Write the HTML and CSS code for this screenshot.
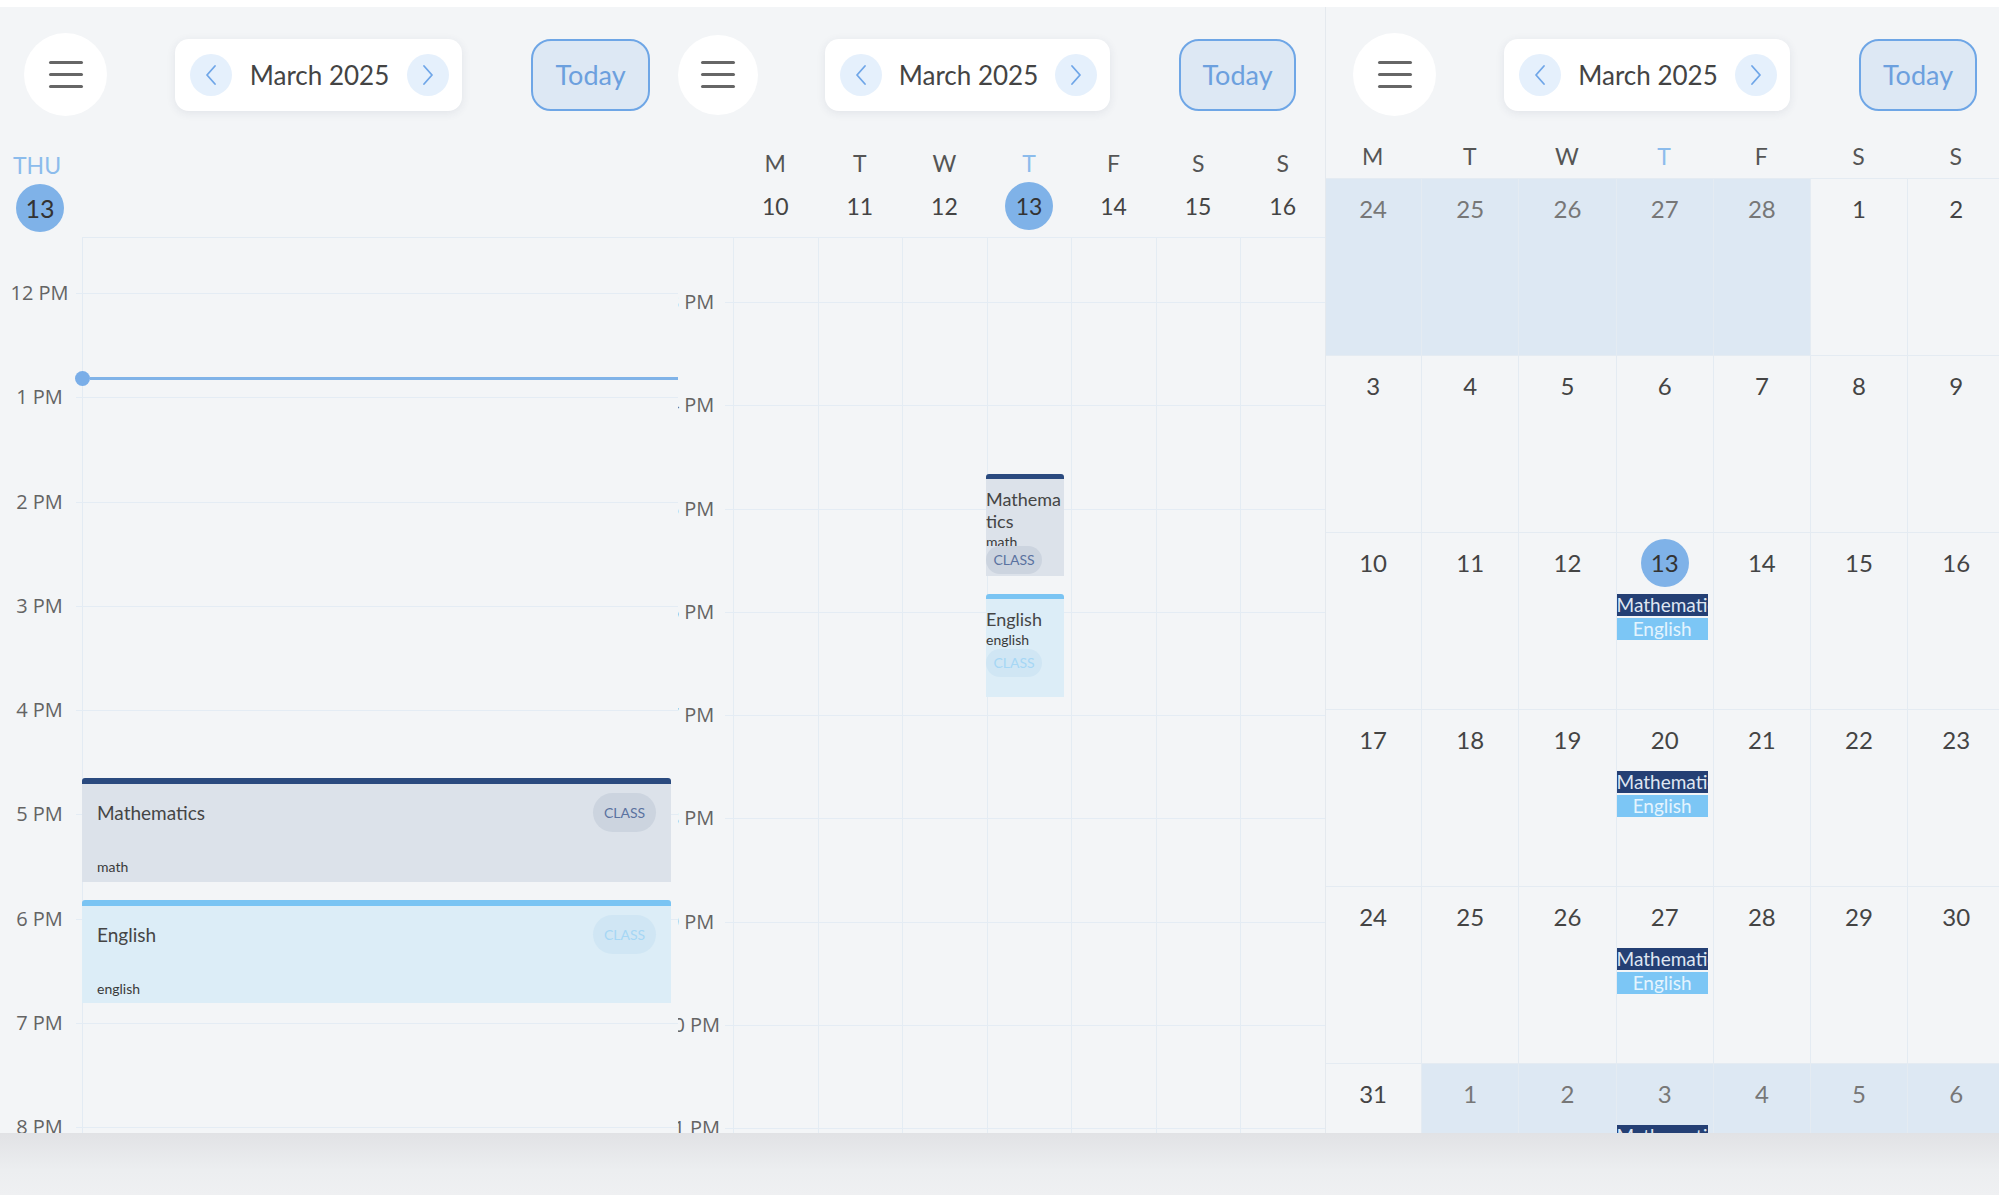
FILE: index.html
```html
<!DOCTYPE html>
<html>
<head>
<meta charset="utf-8">
<title>Calendar</title>
<link rel="stylesheet" href="styles.css">
</head>
<body>
<div class="app">
  <div class="panels">
    <!-- DAY VIEW -->
    <section class="panel day">
      <header class="topbar">
        <div class="menu"><span></span><span></span><span></span></div>
        <div class="month-pill">
          <span class="nav"><svg width="12" height="22" viewBox="0 0 12 22"><path d="M10 2 L2 11 L10 20" fill="none" stroke="#6fa6e8" stroke-width="1.8" stroke-linecap="round" stroke-linejoin="round"/></svg></span>
          <span class="month-label">March 2025</span>
          <span class="nav"><svg width="12" height="22" viewBox="0 0 12 22"><path d="M2 2 L10 11 L2 20" fill="none" stroke="#6fa6e8" stroke-width="1.8" stroke-linecap="round" stroke-linejoin="round"/></svg></span>
        </div>
        <div class="today-btn">Today</div>
      </header>
      <div class="day-head">
        <div class="dow">THU</div>
        <div class="date-circle">13</div>
      </div>
      <div class="day-body">
        <div class="hour"><div class="hlabel">12 PM</div><div class="hline"></div></div>
        <div class="hour"><div class="hlabel">1 PM</div><div class="hline"></div></div>
        <div class="hour"><div class="hlabel">2 PM</div><div class="hline"></div></div>
        <div class="hour"><div class="hlabel">3 PM</div><div class="hline"></div></div>
        <div class="hour"><div class="hlabel">4 PM</div><div class="hline"></div></div>
        <div class="hour"><div class="hlabel">5 PM</div><div class="hline"></div></div>
        <div class="hour"><div class="hlabel">6 PM</div><div class="hline"></div></div>
        <div class="hour"><div class="hlabel">7 PM</div><div class="hline"></div></div>
        <div class="hour"><div class="hlabel">8 PM</div><div class="hline"></div></div>
        <div class="now"><span class="now-dot"></span></div>
        <div class="dev math" style="top:541px;height:104px">
          <div class="dev-row"><span class="dev-title">Mathematics</span><span class="pill">CLASS</span></div>
          <div class="dev-sub">math</div>
        </div>
        <div class="dev eng" style="top:663px;height:103px">
          <div class="dev-row"><span class="dev-title">English</span><span class="pill">CLASS</span></div>
          <div class="dev-sub">english</div>
        </div>
      </div>
    </section>

    <!-- WEEK VIEW -->
    <section class="panel week">
      <header class="topbar">
        <div class="menu"><span></span><span></span><span></span></div>
        <div class="month-pill">
          <span class="nav"><svg width="12" height="22" viewBox="0 0 12 22"><path d="M10 2 L2 11 L10 20" fill="none" stroke="#6fa6e8" stroke-width="1.8" stroke-linecap="round" stroke-linejoin="round"/></svg></span>
          <span class="month-label">March 2025</span>
          <span class="nav"><svg width="12" height="22" viewBox="0 0 12 22"><path d="M2 2 L10 11 L2 20" fill="none" stroke="#6fa6e8" stroke-width="1.8" stroke-linecap="round" stroke-linejoin="round"/></svg></span>
        </div>
        <div class="today-btn">Today</div>
      </header>
      <div class="wk-letters">
        <span></span><span>M</span><span>T</span><span>W</span><span class="tc">T</span><span>F</span><span>S</span><span>S</span>
      </div>
      <div class="wk-dates">
        <span></span><span>10</span><span>11</span><span>12</span><span class="tcircle">13</span><span>14</span><span>15</span><span>16</span>
      </div>
      <div class="wk-body">
        <div class="wk-hour"><div class="wk-hlabel">3 PM</div><div class="wk-hline"></div></div>
        <div class="wk-hour"><div class="wk-hlabel">4 PM</div><div class="wk-hline"></div></div>
        <div class="wk-hour"><div class="wk-hlabel">5 PM</div><div class="wk-hline"></div></div>
        <div class="wk-hour"><div class="wk-hlabel">6 PM</div><div class="wk-hline"></div></div>
        <div class="wk-hour"><div class="wk-hlabel">7 PM</div><div class="wk-hline"></div></div>
        <div class="wk-hour"><div class="wk-hlabel">8 PM</div><div class="wk-hline"></div></div>
        <div class="wk-hour"><div class="wk-hlabel">9 PM</div><div class="wk-hline"></div></div>
        <div class="wk-hour"><div class="wk-hlabel">10 PM</div><div class="wk-hline"></div></div>
        <div class="wk-hour"><div class="wk-hlabel">11 PM</div><div class="wk-hline"></div></div>
        <div class="wev math" style="top:236px;height:102px">
          <div class="wev-title">Mathematics</div>
          <div class="wev-sub">math</div>
          <div class="pill wpill">CLASS</div>
        </div>
        <div class="wev eng" style="top:356px;height:103px">
          <div class="wev-title">English</div>
          <div class="wev-sub">english</div>
          <div class="pill wpill">CLASS</div>
        </div>
      </div>
    </section>

    <!-- MONTH VIEW -->
    <section class="panel month">
      <header class="topbar">
        <div class="menu"><span></span><span></span><span></span></div>
        <div class="month-pill">
          <span class="nav"><svg width="12" height="22" viewBox="0 0 12 22"><path d="M10 2 L2 11 L10 20" fill="none" stroke="#6fa6e8" stroke-width="1.8" stroke-linecap="round" stroke-linejoin="round"/></svg></span>
          <span class="month-label">March 2025</span>
          <span class="nav"><svg width="12" height="22" viewBox="0 0 12 22"><path d="M2 2 L10 11 L2 20" fill="none" stroke="#6fa6e8" stroke-width="1.8" stroke-linecap="round" stroke-linejoin="round"/></svg></span>
        </div>
        <div class="today-btn">Today</div>
      </header>
      <div class="mo-letters">
        <span>M</span><span>T</span><span>W</span><span class="tc">T</span><span>F</span><span>S</span><span>S</span>
      </div>
      <div class="mo-grid">
        <div class="mcell other"><div class="mnum">24</div></div>
        <div class="mcell other"><div class="mnum">25</div></div>
        <div class="mcell other"><div class="mnum">26</div></div>
        <div class="mcell other"><div class="mnum">27</div></div>
        <div class="mcell other"><div class="mnum">28</div></div>
        <div class="mcell"><div class="mnum">1</div></div>
        <div class="mcell"><div class="mnum">2</div></div>

        <div class="mcell"><div class="mnum">3</div></div>
        <div class="mcell"><div class="mnum">4</div></div>
        <div class="mcell"><div class="mnum">5</div></div>
        <div class="mcell"><div class="mnum">6</div></div>
        <div class="mcell"><div class="mnum">7</div></div>
        <div class="mcell"><div class="mnum">8</div></div>
        <div class="mcell"><div class="mnum">9</div></div>

        <div class="mcell"><div class="mnum">10</div></div>
        <div class="mcell"><div class="mnum">11</div></div>
        <div class="mcell"><div class="mnum">12</div></div>
        <div class="mcell"><div class="mnum today">13</div><div class="chip cm">Mathematics</div><div class="chip ce">English</div></div>
        <div class="mcell"><div class="mnum">14</div></div>
        <div class="mcell"><div class="mnum">15</div></div>
        <div class="mcell"><div class="mnum">16</div></div>

        <div class="mcell"><div class="mnum">17</div></div>
        <div class="mcell"><div class="mnum">18</div></div>
        <div class="mcell"><div class="mnum">19</div></div>
        <div class="mcell"><div class="mnum">20</div><div class="chip cm">Mathematics</div><div class="chip ce">English</div></div>
        <div class="mcell"><div class="mnum">21</div></div>
        <div class="mcell"><div class="mnum">22</div></div>
        <div class="mcell"><div class="mnum">23</div></div>

        <div class="mcell"><div class="mnum">24</div></div>
        <div class="mcell"><div class="mnum">25</div></div>
        <div class="mcell"><div class="mnum">26</div></div>
        <div class="mcell"><div class="mnum">27</div><div class="chip cm">Mathematics</div><div class="chip ce">English</div></div>
        <div class="mcell"><div class="mnum">28</div></div>
        <div class="mcell"><div class="mnum">29</div></div>
        <div class="mcell"><div class="mnum">30</div></div>

        <div class="mcell"><div class="mnum">31</div></div>
        <div class="mcell other"><div class="mnum">1</div></div>
        <div class="mcell other"><div class="mnum">2</div></div>
        <div class="mcell other"><div class="mnum">3</div><div class="chip cm">Mathematics</div><div class="chip ce">English</div></div>
        <div class="mcell other"><div class="mnum">4</div></div>
        <div class="mcell other"><div class="mnum">5</div></div>
        <div class="mcell other"><div class="mnum">6</div></div>
      </div>
    </section>
  </div>
  <div class="footer"></div>
</div>
</body>
</html>
```

FILE: styles.css
```css
* { box-sizing: border-box; margin: 0; padding: 0; }
html, body { background: #ffffff; overflow: hidden; }
body { font-family: Lato, "Open Sans", sans-serif; color: #444444; }

.app {
  margin-top: 7px;
  width: 1999px;
  height: 1188px;
  background: #f3f5f7;
  display: flex;
  flex-direction: column;
  overflow: hidden;
}
.panels { display: flex; height: 1126px; flex: none; }
.panel {
  position: relative;
  overflow: hidden;
  display: flex;
  flex-direction: column;
  flex: none;
}
.day { width: 678px; }
.week { width: 647px; }
.month { width: 674px; border-left: 1px solid #e4e9ee; }
.footer {
  flex: none;
  height: 62px;
  background: linear-gradient(#e1e2e5, #eceef0 60%, #eff0f2);
}

/* ---------- top bar ---------- */
.topbar {
  display: flex;
  align-items: center;
  margin-top: 26px;
  height: 83px;
  flex: none;
}
.day .topbar { padding-left: 24px; }
.week .topbar { padding-left: 0; }
.month .topbar { padding-left: 27px; }

.menu {
  flex: none;
  width: 83px;
  height: 83px;
  border-radius: 50%;
  background: #ffffff;
  display: flex;
  flex-direction: column;
  align-items: center;
  justify-content: center;
  gap: 9px;
}
.menu span {
  display: block;
  width: 34px;
  height: 3px;
  border-radius: 2px;
  background: #666666;
}
.month-pill {
  flex: none;
  margin-left: 68px;
  width: 287px;
  height: 72px;
  background: #ffffff;
  border-radius: 14px;
  box-shadow: 0 2px 10px rgba(40, 60, 90, 0.09);
  display: flex;
  align-items: center;
  justify-content: space-between;
  padding: 0 13px 0 15px;
}
.nav {
  width: 42px;
  height: 42px;
  border-radius: 50%;
  background: #e5f0fc;
  display: flex;
  align-items: center;
  justify-content: center;
}
.month-label { font-size: 26px; color: #444444; }
.today-btn {
  flex: none;
  margin-left: 69px;
  width: 119px;
  height: 72px;
  border: 2px solid #6ea6e6;
  border-radius: 20px;
  background: #dde8f4;
  color: #6ca0de;
  font-size: 27px;
  display: flex;
  align-items: center;
  justify-content: center;
}
.week .menu { width: 80px; height: 80px; }
.week .month-pill { margin-left: 67px; width: 285px; }
.week .today-btn { width: 117px; }
.month .month-pill { margin-left: 68px; width: 286px; }
.month .today-btn { margin-left: 69px; width: 118px; }

/* ---------- day view ---------- */
.day-head { flex: none; margin-top: 35px; padding-left: 13px; }
.dow { font-size: 23px; line-height: 28px; color: #8cbcec; }
.date-circle {
  margin: 5px 0 0 3px;
  width: 48px;
  height: 48px;
  border-radius: 50%;
  background: #7fb2e8;
  color: #333333;
  font-size: 25px;
  line-height: 48px;
  text-align: center;
}
.day-body {
  position: relative;
  flex: 1;
  margin-top: 5px;
  overflow: hidden;
  padding-top: 56px;
  background:
    linear-gradient(#e3ebf3, #e3ebf3) 82px 0 / 1px 100% no-repeat,
    linear-gradient(#e3ebf3, #e3ebf3) 82px 0 / 100% 1px no-repeat;
}
.hour { display: flex; height: 104.3px; }
.hlabel, .wk-hlabel {
  flex: none;
  height: 24px;
  line-height: 24px;
  margin-top: -12px;
  text-align: center;
  white-space: nowrap;
  font-family: "Open Sans", Lato, sans-serif;
  font-size: 20px;
  color: #646464;
}
.hlabel { width: 76px; padding-left: 3px; }
.hline, .wk-hline { flex: 1; border-top: 1px solid #e4ecf4; }

.now {
  position: absolute;
  left: 90px;
  right: 0;
  top: 140px;
  height: 3px;
  background: #80b3e8;
}
.now-dot {
  position: absolute;
  left: -15px;
  top: -6px;
  width: 15px;
  height: 15px;
  border-radius: 50%;
  background: #7aaee8;
}

.dev, .wev {
  position: absolute;
  overflow: hidden;
  border-top-style: solid;
  border-radius: 3px 3px 0 0;
}
.dev {
  left: 82px;
  width: 589px;
  border-top-width: 6px;
}
.dev-row {
  display: flex;
  justify-content: space-between;
  align-items: center;
  padding: 9px 15px 0 15px;
}
.dev-title { font-size: 19px; color: #454545; }
.pill {
  width: 63px;
  height: 39px;
  border-radius: 20px;
  font-size: 14px;
  line-height: 39px;
  text-align: center;
}
.dev-sub { margin-top: 26px; padding-left: 15px; font-size: 14px; line-height: 17px; color: #3a3a3a; }

/* ---------- week view ---------- */
.wk-letters, .wk-dates {
  flex: none;
  display: grid;
  grid-template-columns: 55px repeat(7, 1fr);
  text-align: center;
  font-size: 23px;
}
.wk-letters { margin-top: 33px; line-height: 28px; color: #555555; }
.wk-dates { margin-top: 5px; height: 48px; line-height: 48px; color: #444444; }
.tc { color: #8cbcec !important; }
.tcircle {
  justify-self: center;
  width: 48px;
  height: 48px;
  border-radius: 50%;
  background: #7fb2e8;
  color: #333333;
}
.wk-body {
  position: relative;
  flex: 1;
  margin-top: 7px;
  overflow: hidden;
  padding-top: 64px;
  border-top: 1px solid #e4ecf4;
  background: repeating-linear-gradient(90deg, #e4ecf3 0 1px, transparent 1px 84.57px) 55px 0 / 592px 100% no-repeat;
}
.wk-hour { display: flex; height: 103.25px; }
.wk-hlabel { width: 68px; margin-left: -21px; }

.wev {
  left: 308px;
  width: 78px;
  display: flex;
  flex-direction: column;
  border-top-width: 5px;
  padding: 9px 0 2px 0;
}
.wev-title { flex: none; font-size: 18px; line-height: 22px; word-break: break-all; color: #454545; }
.wev-sub { flex: 0 1 auto; min-height: 0; overflow: hidden; font-size: 14px; line-height: 19px; color: #3a3a3a; }
.pill.wpill { flex: none; width: 56px; height: 28px; line-height: 28px; border-radius: 14px; }

/* event colours */
.math { border-top-color: #2a4a7f; background: #dce2ea; }
.math .pill { background: #ccd4df; color: #5a72a0; }
.eng { border-top-color: #7ac4f3; background: #dcedf7; }
.eng .pill { background: #d0e6f4; color: #a6d7f5; }

/* ---------- month view ---------- */
.mo-letters, .mo-grid {
  flex: none;
  width: 681px;
  margin-left: -2px;
  display: grid;
  grid-template-columns: repeat(7, 97.2px);
}
.mo-letters {
  margin-top: 26px;
  text-align: center;
  font-size: 23px;
  line-height: 28px;
  color: #555555;
}
.mo-grid {
  margin-top: 8px;
  grid-auto-rows: 177px;
}
.mcell {
  border-left: 1px solid #e4ebf2;
  border-top: 1px solid #e4ebf2;
  padding-top: 6px;
  overflow: hidden;
}
.mcell.other { background: #dde8f3; }
.mnum {
  margin: 0 auto;
  width: 48px;
  height: 48px;
  line-height: 48px;
  text-align: center;
  font-size: 24px;
  color: #444444;
}
.other .mnum { color: #777777; }
.mnum.today { border-radius: 50%; background: #7fb2e8; color: #333333; }
.chip {
  height: 22px;
  margin: 2px 5px 0 0;
  line-height: 22px;
  font-size: 19px;
  text-align: center;
  white-space: nowrap;
  overflow: hidden;
}
.chip.cm { margin-top: 7px; background: #243f74; color: #dfe6f2; }
.chip.ce { background: #7cc6f5; color: #e4f4fe; }
```
